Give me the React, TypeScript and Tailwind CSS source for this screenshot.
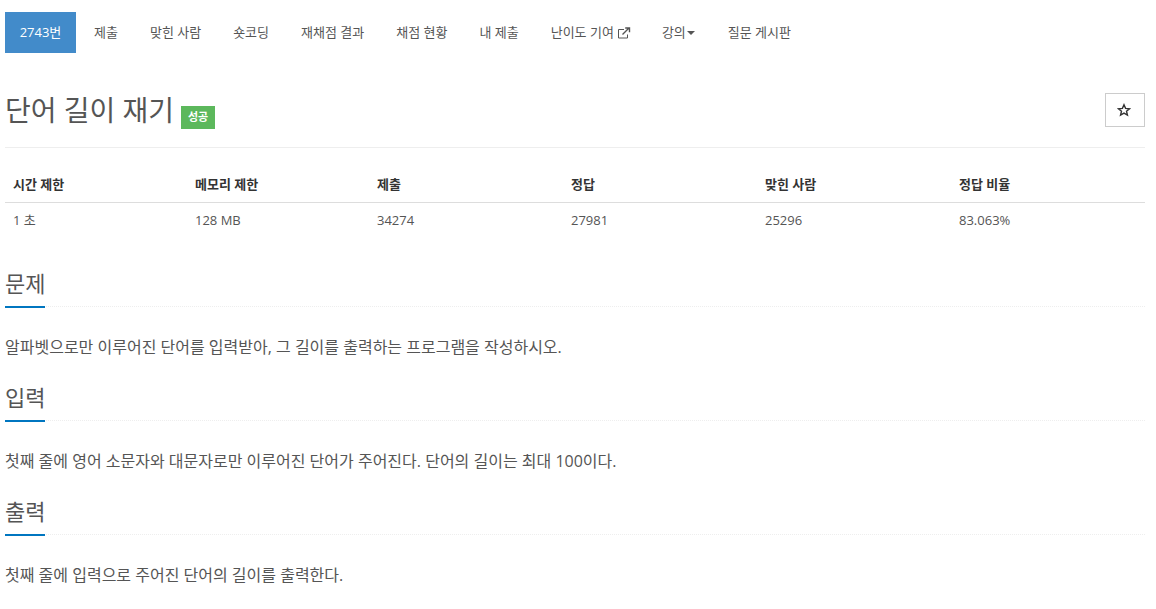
import React from 'react';

const font = "font-['Open_Sans','Noto_Sans_CJK_KR',sans-serif]";

const tabs = ['제출', '맞힌 사람', '숏코딩', '재채점 결과', '채점 현황', '내 제출'];
const heads = ['시간 제한', '메모리 제한', '제출', '정답', '맞힌 사람', '정답 비율'];
const cells = ['1 초', '128 MB', '34274', '27981', '25296', '83.063%'];
const widths = ['w-[182px]', 'w-[182px]', 'w-[194px]', 'w-[194px]', 'w-[194px]', 'w-[194px]'];

const sections = [
  { title: '문제', body: '알파벳으로만 이루어진 단어를 입력받아, 그 길이를 출력하는 프로그램을 작성하시오.' },
  { title: '입력', body: '첫째 줄에 영어 소문자와 대문자로만 이루어진 단어가 주어진다. 단어의 길이는 최대 100이다.' },
  { title: '출력', body: '첫째 줄에 입력으로 주어진 단어의 길이를 출력한다.' },
];

const App: React.FC = () => {
  return (
    <div className={`${font} h-[609px] overflow-hidden bg-white pl-[5px] pr-[11px] pt-3 text-[#555555]`}>
      {/* 상단 탭 */}
      <ul className="flex h-[41px] items-center text-[13px]">
        <li className="mr-[2px] flex h-[41px] w-[71px] items-center justify-center bg-[#428bca] text-white">2743번</li>
        {tabs.map((t) => (
          <li key={t} className="px-4">{t}</li>
        ))}
        <li className="flex items-center px-4">
          난이도 기여
          <svg className="ml-[3px]" width="14" height="12" viewBox="0 0 14 12" fill="none" stroke="currentColor">
            <path d="M10.500 7.500v3.500h-9v-8.500H7" strokeWidth="1" />
            <path d="M5.500 7.500l6.500-6.500M8.200 1h4.300v4.300" strokeWidth="1.400" />
          </svg>
        </li>
        <li className="-ml-px flex items-center px-4">
          강의
          <span className="ml-[1px] h-0 w-0 border-x-4 border-t-4 border-x-transparent border-t-[#555555]" />
        </li>
        <li className="ml-px px-4">질문 게시판</li>
      </ul>

      {/* 제목 */}
      <div className="mt-[27px] flex h-[68px] items-start justify-between border-b border-[#eeeeee]">
        <div className="flex items-center pt-[11px]">
          <h1 className="text-[28px] leading-[38px] text-[#555555]">단어 길이 재기</h1>
          <span className="ml-[7px] mt-[15px] flex h-[23px] w-[34px] items-center justify-center bg-[#5cb85c] text-[11px] font-bold text-white">성공</span>
        </div>
        <button className="mt-[13px] flex h-[34px] w-[40px] items-center justify-center border border-[#cccccc] bg-white pr-[2px] text-[#333333]">
          <svg width="14" height="14" viewBox="0 0 24 24" fill="none" stroke="currentColor" strokeWidth="2.400" strokeLinejoin="miter">
            <path d="M12 3l2.700 6.200 6.800.6-5.200 4.400 1.600 6.600L12 17.300l-5.900 3.500 1.600-6.600L2.500 9.800l6.800-.6z" />
          </svg>
        </button>
      </div>

      {/* 제한 표 */}
      <table className="mt-[19px] w-full table-fixed border-collapse text-[13px]">
        <thead>
          <tr className="h-[35px] border-b border-[#dddddd] text-left text-[#333333]">
            {heads.map((h, i) => (
              <th key={h} className={`${widths[i]} px-2 font-bold`}>{h}</th>
            ))}
          </tr>
        </thead>
        <tbody>
          <tr className="h-[36px]">
            {cells.map((c) => (
              <td key={c} className="px-2">{c}</td>
            ))}
          </tr>
        </tbody>
      </table>

      {/* 본문 */}
      <div className="mt-[11px]">
        {sections.map((s) => (
          <section key={s.title} className="h-[114px]">
            <div className="relative h-[58px] border-b border-dotted border-[#eeeeee] pt-[20px]">
              <h2 className="text-[22px] leading-[28px] text-[#555555]">{s.title}</h2>
              <span className="absolute bottom-[-2px] left-0 h-[2px] w-[40px] bg-[#0076c0]" />
            </div>
            <p className="mt-[28px] text-[16px] leading-[24px]">{s.body}</p>
          </section>
        ))}
      </div>
    </div>
  );
};

export default App;
